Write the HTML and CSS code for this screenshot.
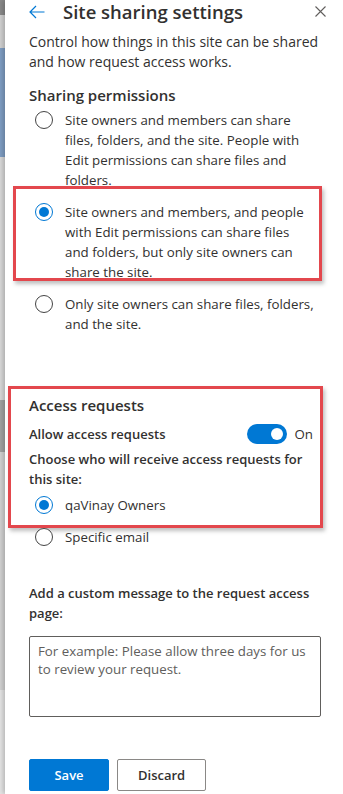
FILE: index.html
```html
<!DOCTYPE html>
<html lang="en">
<head>
	<meta charset="UTF-8">
	<meta name="viewport" content="width=device-width, initial-scale=1.0">
	<title>Site sharing settings</title>
	<link rel="stylesheet" href="styles.css">
</head>
<body>
	<div class="page">
		<div class="backdrop"></div>
		<div class="panel">
			<header class="panel-header">
				<button class="icon-btn back" aria-label="Back">
					<svg width="16" height="14" viewBox="0 0 16 14"><path d="M7 1 L1 7 L7 13 M1 7 H15.5" fill="none" stroke="#0078d4" stroke-width="1.2"/></svg>
				</button>
				<h1>Site sharing settings</h1>
				<button class="icon-btn close" aria-label="Close">
					<svg width="11" height="11" viewBox="0 0 11 11"><path d="M0.5 0.5 L10.5 10.5 M10.5 0.5 L0.5 10.5" fill="none" stroke="#605e5c" stroke-width="1.1"/></svg>
				</button>
			</header>

			<p class="intro">Control how things in this site can be shared and how request access works.</p>

			<section class="section">
				<h2>Sharing permissions</h2>
				<div class="choices">
					<label class="choice">
						<input type="radio" name="sharing">
						<span>Site owners and members can share<br>files, folders, and the site. People with<br>Edit permissions can share files and<br>folders.</span>
					</label>
					<label class="choice highlight highlight-option">
						<input type="radio" name="sharing" checked>
						<span>Site owners and members, and people<br>with Edit permissions can share files<br>and folders, but only site owners can<br>share the site.</span>
					</label>
					<label class="choice">
						<input type="radio" name="sharing">
						<span>Only site owners can share files, folders,<br>and the site.</span>
					</label>
				</div>
			</section>

			<div class="highlight highlight-access">
				<h2>Access requests</h2>
				<div class="toggle-row">
					<span class="field-label">Allow access requests</span>
					<span class="toggle on"></span>
					<span class="toggle-text">On</span>
				</div>
				<p class="field-label choose-label">Choose who will receive access requests for this site:</p>
				<label class="choice">
					<input type="radio" name="receiver" checked>
					<span>qaVinay Owners</span>
				</label>
			</div>
			<label class="choice specific">
				<input type="radio" name="receiver">
				<span>Specific email</span>
			</label>

			<label class="field-label message-label" for="message">Add a custom message to the request access page:</label>
			<textarea id="message" placeholder="For example: Please allow three days for us to review your request."></textarea>

			<div class="actions">
				<button class="btn btn-primary">Save</button>
				<button class="btn">Discard</button>
			</div>
		</div>
	</div>
</body>
</html>
```

FILE: styles.css
```css
body {
	margin: 0;
	font-family: "Open Sans", "Noto Sans", sans-serif;
	font-size: 13px;
	line-height: 20px;
	color: #323130;
	background: #ffffff;
}
.page {
	display: flex;
	min-height: 794px;
	overflow: hidden;
}
.backdrop {
	width: 5px;
	flex-shrink: 0;
	background: linear-gradient(to bottom,
		#8a8a8a 0, #8a8a8a 15px,
		#d2d2d2 15px, #d2d2d2 48px,
		#7f9ec4 48px, #7f9ec4 157px,
		#dadada 157px, #dadada 400px,
		#a3a3a3 400px, #a3a3a3 452px,
		#d3d3d3 452px, #d3d3d3 690px,
		#e6e6e6 690px);
}
.panel {
	flex: 1;
	min-width: 0;
	background: #ffffff;
	padding: 0 22px 0 24px;
	box-shadow: -2px 0 5px rgba(0, 0, 0, 0.22);
	position: relative;
}
.panel-header {
	display: flex;
	align-items: center;
	height: 23px;
}
.icon-btn {
	border: none;
	background: none;
	padding: 0;
	display: flex;
	cursor: pointer;
}
.back { margin-right: 18px; }
.close { margin-left: auto; margin-right: -5px; }
h1 {
	margin: 0;
	font-size: 18.5px;
	font-weight: 600;
	line-height: 23px;
}
.intro {
	margin: 9px 0 0;
	font-size: 14px;
	line-height: 19.5px;
}
h2 {
	margin: 0;
	font-size: 15px;
	font-weight: 600;
	line-height: 22px;
}
.section { margin-top: 13px; }
.choices {
	display: flex;
	flex-direction: column;
	gap: 12px;
	margin-top: 4px;
}
.choice {
	display: flex;
	align-items: flex-start;
	gap: 12px;
	padding-left: 6px;
	font-size: 13.3px;
	white-space: nowrap;
	cursor: pointer;
}
.choice input {
	appearance: none;
	-webkit-appearance: none;
	margin: 1px 0 0;
	width: 18px;
	height: 18px;
	flex-shrink: 0;
	border: 1px solid #444444;
	border-radius: 50%;
	background: #ffffff;
	position: relative;
}
.choice input:checked {
	border: 1.5px solid #0078d4;
}
.choice input:checked::after {
	content: '';
	position: absolute;
	top: 50%;
	left: 50%;
	transform: translate(-50%, -50%);
	width: 10px;
	height: 10px;
	border-radius: 50%;
	background: #0078d4;
}
/* red annotation frames drawn over the screenshot */
.highlight { position: relative; }
.highlight::after {
	content: '';
	position: absolute;
	border: 3px solid #e3474d;
	box-shadow: 2px 3px 4px rgba(0, 0, 0, 0.25);
	pointer-events: none;
}
.highlight-option::after {
	top: -16px;
	right: -1px;
	bottom: 1px;
	left: -16px;
}
.highlight-access {
	margin-top: 60px;
}
.highlight-access::after {
	top: -8px;
	right: -2px;
	bottom: -13px;
	left: -21px;
}
.field-label {
	font-weight: 600;
	margin: 0;
}
.toggle-row {
	display: flex;
	align-items: center;
	margin-top: 8px;
	padding-right: 8px;
}
.toggle-row .field-label { flex: 1; }
.toggle {
	width: 40px;
	height: 20px;
	border-radius: 10px;
	background: #0078d4;
	position: relative;
}
.toggle::after {
	content: '';
	position: absolute;
	top: 4px;
	right: 4px;
	width: 12px;
	height: 12px;
	border-radius: 50%;
	background: #ffffff;
}
.toggle-text { margin-left: 8px; font-size: 13.3px; }
.choose-label { margin-top: 5px; }
.highlight-access .choice { margin-top: 6px; }
.specific { margin-top: 12px; }
.message-label {
	display: block;
	margin-top: 36px;
}
textarea {
	display: block;
	box-sizing: border-box;
	width: 100%;
	height: 81px;
	margin-top: 13px;
	padding: 6px 8px;
	border: 1px solid #605e5c;
	border-radius: 2px;
	font-family: inherit;
	font-size: 13.3px;
	line-height: 17.5px;
	color: #323130;
	resize: none;
}
textarea::placeholder { color: #605e5c; }
.actions {
	display: flex;
	gap: 8px;
	margin-top: 42px;
}
.btn {
	height: 32px;
	padding: 0 20px;
	border: 1px solid #8a8886;
	border-radius: 2px;
	background: #ffffff;
	color: #323130;
	font-family: inherit;
	font-size: 13px;
	font-weight: 600;
	cursor: pointer;
}
.btn-primary {
	width: 80px;
	background: #0078d4;
	border-color: #0078d4;
	color: #ffffff;
}
```
